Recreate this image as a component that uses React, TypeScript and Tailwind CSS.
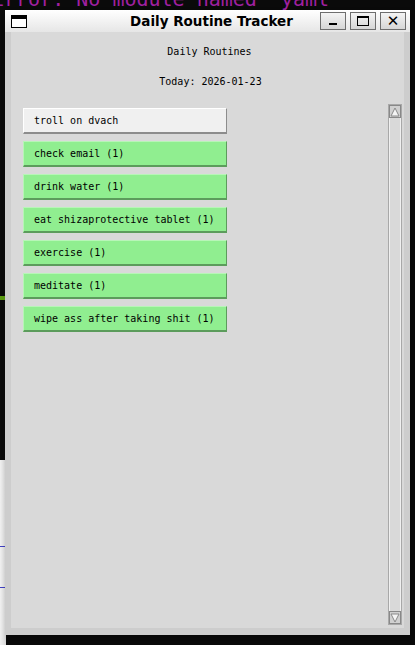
import React from "react";

const routines = [
  { name: "troll on dvach", done: false },
  { name: "check email (1)", done: true },
  { name: "drink water (1)", done: true },
  { name: "eat shizaprotective tablet (1)", done: true },
  { name: "exercise (1)", done: true },
  { name: "meditate (1)", done: true },
  { name: "wipe ass after taking shit (1)", done: true },
];

const mono = "font-['DejaVu_Sans_Mono','Liberation_Mono',monospace]";

const TitleButton = ({ children }: { children: React.ReactNode }) => (
  <div className="w-[26px] h-[18px] border border-[#6e6e6e] bg-gradient-to-b from-[#f4f4f4] to-[#d6d6d6] flex items-center justify-center">
    {children}
  </div>
);

const RoutineButton = ({ name, done }: { name: string; done: boolean }) => (
  <div
    className={`w-[204px] h-[26px] flex items-center pl-[10px] text-[10px] text-black ${mono} border ${
      done
        ? "bg-[#90ee90] border-t-[#b8f5b8] border-l-[#b8f5b8] border-b-[#5c9c5c] border-r-[#5c9c5c]"
        : "bg-[#f0f0f0] border-t-[#ffffff] border-l-[#ffffff] border-b-[#8c8c8c] border-r-[#8c8c8c]"
    } border-b-2`}
  >
    {name}
  </div>
);

const Scrollbar = () => (
  <div className="w-[14px] flex flex-col border border-[#a8a8a8] bg-[#d9d9d9]">
    <div className="h-[13px] border border-[#888] bg-[#d0d0d0] flex items-center justify-center">
      <svg width="10" height="10" viewBox="0 0 10 10">
        <polygon points="5,1 9,9 1,9" fill="#f4f4f4" stroke="#8a8a8a" strokeWidth="1" />
      </svg>
    </div>
    <div className="flex-1 border-x border-[#f0f0f0]" />
    <div className="h-[13px] border border-[#888] bg-[#d0d0d0] flex items-center justify-center">
      <svg width="10" height="10" viewBox="0 0 10 10">
        <polygon points="1,1 9,1 5,9" fill="#f4f4f4" stroke="#8a8a8a" strokeWidth="1" />
      </svg>
    </div>
  </div>
);

export default function App() {
  return (
    <div className="relative w-[415px] h-[645px] overflow-hidden bg-[#0a0a0a]">
      {/* terminal behind the window */}
      <div className={`absolute -left-[8px] -top-[11px] text-[20px] leading-[20px] text-[#a020a0] whitespace-pre ${mono}`}>
        Error: No module named 'yaml'
      </div>
      <div className="absolute left-0 top-[460px] w-[6px] h-[185px] bg-gradient-to-r from-[#f0f0f0] to-[#d8d8d8]">
        <div className="mt-[86px] h-px bg-[#4040c0]" />
        <div className="mt-[40px] h-px bg-[#4040c0]" />
      </div>
      <div className="absolute left-0 top-[296px] w-[5px] h-[4px] bg-[#5a9a10]" />

      {/* window */}
      <div className="absolute left-[5px] top-[10px] w-[405px] h-[625px] flex flex-col bg-[#cdcdcd] shadow-[3px_4px_6px_rgba(0,0,0,0.35)]">
        <div className="h-[22px] grid grid-cols-[1fr_auto_1fr] items-center px-[6px] bg-gradient-to-b from-[#ffffff] to-[#e6e6e6]">
          <div className="w-[16px] h-[13px] border-[1.5px] border-black border-t-[4px] bg-white" />
          <div className="text-center text-[13.5px] font-bold text-black font-['DejaVu_Sans','Liberation_Sans',sans-serif] pl-[8px]">
            Daily Routine Tracker
          </div>
          <div className="flex gap-[4px] justify-end -mr-[2px]">
            <TitleButton>
              <div className="w-[8px] h-[2px] bg-black mt-[6px]" />
            </TitleButton>
            <TitleButton>
              <div className="w-[12px] h-[10px] border border-black border-t-2" />
            </TitleButton>
            <TitleButton>
              <span className="text-[15px] leading-none font-bold font-['DejaVu_Sans',sans-serif]">✕</span>
            </TitleButton>
          </div>
        </div>

        <div className="flex-1 mx-[6px] mb-[7px] bg-[#d9d9d9] flex flex-col">
          <div className={`text-[10px] text-black text-center ${mono} pt-[12px] pl-[4px]`}>Daily Routines</div>
          <div className={`text-[10px] text-black text-center ${mono} mt-[15px] pl-[6px]`}>Today: 2026-01-23</div>
          <div className="flex-1 flex mt-[15px] pl-[12px] pr-[2px] pb-[3px]">
            <div className="flex-1 flex flex-col gap-[7px] pt-[4px]">
              {routines.map((r) => (
                <RoutineButton key={r.name} name={r.name} done={r.done} />
              ))}
            </div>
            <Scrollbar />
          </div>
        </div>
      </div>
    </div>
  );
}
